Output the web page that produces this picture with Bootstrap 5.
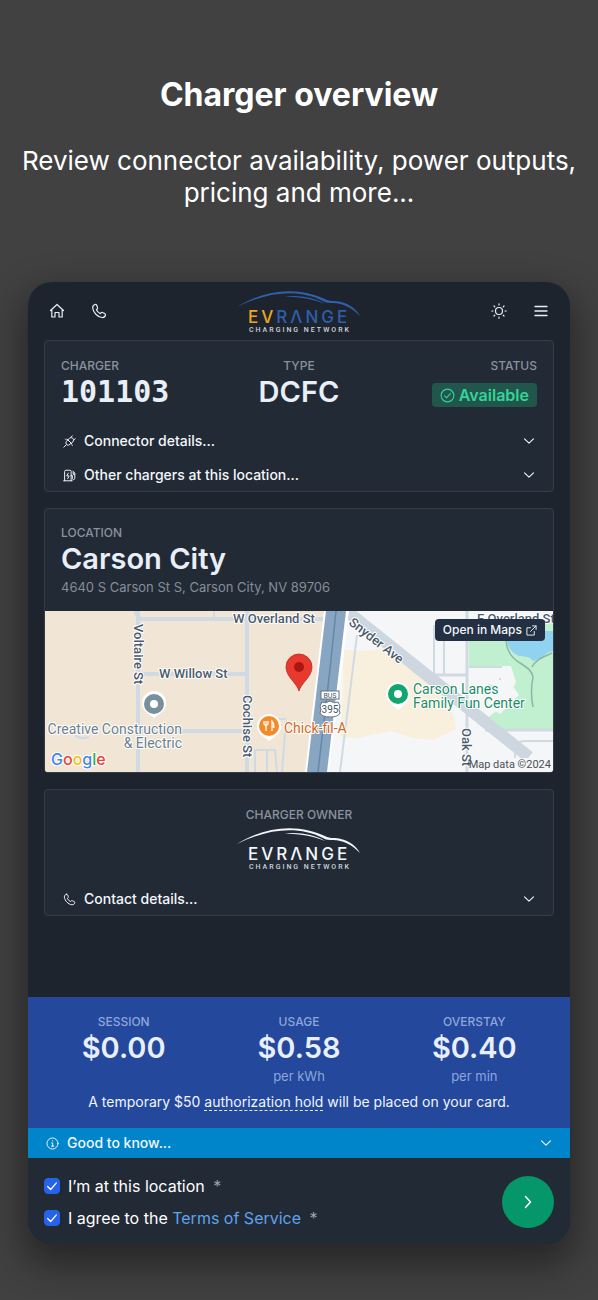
<!DOCTYPE html>
<html lang="en" data-bs-theme="dark">
<head>
<meta charset="utf-8">
<meta name="viewport" content="width=device-width, initial-scale=1">
<title>Charger overview</title>
<link href="https://cdn.jsdelivr.net/npm/bootstrap@5.3.0/dist/css/bootstrap.min.css" rel="stylesheet">
<style>
  body { background: #414142; color: #fff; font-family: "Inter", "Roboto", sans-serif; font-size: 14px; line-height: 20px; }
  svg { display: block; }
  .intro { padding: 73px 12px; }
  .intro h1 { font-size: 32px; line-height: 44px; font-weight: 700; margin-bottom: 28px; }
  .intro p { font-size: 26px; line-height: 32px; margin: 0; }
  .device { margin: 0 28px 55px; border-radius: 24px; background: #1e242e; overflow: hidden; box-shadow: 0 16px 36px 6px rgba(0,0,0,.4); }
  .topbar { height: 58px; padding: 0 12px; }
  .icon-btn { padding: 9px; border: 0; background: none; color: #e8eef6; }
  .icon-btn svg { width: 16px; height: 16px; }
  .stroke { fill: none; stroke: currentColor; stroke-linecap: round; stroke-linejoin: round; stroke-width: 1.5; }
  .panels { padding: 0 16px 81px; gap: 16px; }
  .panel { background: #222a35; border: 1px solid #353d49; border-radius: 4px; overflow: hidden; }
  .eyebrow { font-size: 12px; line-height: 16px; color: #8a929f; text-transform: uppercase; font-weight: 500; }
  .big { font-size: 29px; line-height: 36px; font-weight: 600; color: #e9eff8; }
  .big-mono { font-family: "DejaVu Sans Mono", monospace; font-size: 30px; font-weight: 700; }
  .facts { padding: 17px 16px 15px; }
  .status { background: #20564c; color: #35d399; border-radius: 4px; font-size: 16px; line-height: 24px; font-weight: 600; padding: 0 8px; margin-top: 9px; gap: 4px; }
  .fold { width: 100%; height: 32px; border: 0; background: none; color: #f3f7fc; font-weight: 500; font-size: 14px; padding: 0 18px; gap: 8px; }
  .fold + .fold { margin-top: 2px; }
  .fold svg { width: 13px; height: 13px; flex: none; }
  .fold .chev { width: 12px; height: 12px; }
  .place { padding: 16px 16px 14px; }
  .muted { color: #858d99; font-size: 13px; }
  .map-box svg.map { width: 100%; height: 161px; }
  .map-link { top: 8px; right: 8px; height: 22px; padding: 0 8px; border-radius: 4px; background: #232f42; color: #f3f7fc; font-size: 12px; font-weight: 500; text-decoration: none; gap: 4px; }
  .lbl { font-family: "Roboto", sans-serif; font-size: 13px; font-weight: 500; fill: #4b5a6c; paint-order: stroke; stroke: #fff; stroke-width: 2px; stroke-linejoin: round; }
  .poi { font-size: 14px; font-weight: 400; }
  .road { fill: none; stroke: #d0dae2; stroke-width: 4; }
  .owner { padding-top: 17px; }
  .brand-name { font-family: "Inter", sans-serif; font-size: 17px; letter-spacing: 3px; font-weight: 500; }
  .brand-tag { font-family: "Roboto", sans-serif; font-size: 7px; letter-spacing: 2px; font-weight: 500; }
  .prices { background: #23489c; padding: 17px 8px 16px; }
  .prices .eyebrow, .prices .muted { color: #8ea6dc; }
  .prices .muted { line-height: 20px; min-height: 20px; }
  .prices .note { margin: 6px 0 0; color: #f0f5ff; font-size: 14px; }
  .prices .note a { color: inherit; text-decoration: none; border-bottom: 1px dashed #dce6ff; }
  .know { background: #0085ca; height: 30px; }
  .consent { background: #222a35; padding: 16px 16px 14px; }
  .consent .form-check { min-height: 24px; padding-left: 24px; margin: 0; font-size: 16px; line-height: 24px; }
  .consent .form-check-input { width: 16px; height: 16px; margin-top: 4px; margin-left: -24px; border-radius: 4px; background-color: #2563eb; border-color: #2563eb; }
  .consent .form-check-input:checked { background-image: url("data:image/svg+xml,%3csvg xmlns='http://www.w3.org/2000/svg' viewBox='0 0 16 16'%3e%3cpath fill='none' stroke='%23fff' stroke-width='1.5' stroke-linecap='round' stroke-linejoin='round' d='m3 8.500 3.500 3.500L13 4.500'/%3e%3c/svg%3e"); }
  .consent a { color: #5ea3ec; text-decoration: none; }
  .req { color: #9aa3b0; margin-left: 4px; }
  .next { width: 52px; height: 52px; border: 0; border-radius: 50%; background: #059669; color: #fff; }
</style>
</head>
<body>
<svg width="0" height="0" class="position-absolute" aria-hidden="true">
  <symbol id="i-phone" viewBox="0 0 16 16"><path class="stroke" style="stroke-width:1.2" d="M4.200 1.500c-1.500.4-2.700 1.700-2.500 3.500.5 4.600 4.700 9 9.300 9.500 1.800.2 3.100-1 3.500-2.500.2-.7-.2-1.200-.8-1.500l-2.200-1c-.6-.3-1.100-.1-1.500.3l-.7.800C7.500 9.700 6.200 8.400 5.400 6.700l.8-.7c.4-.4.6-.9.3-1.500l-.8-2.200c-.3-.6-.8-1-1.500-.8z"/></symbol>
  <symbol id="i-down" viewBox="0 0 12 12"><path class="stroke" style="stroke-width:1.100" d="M1.500 3.800 6 8.200l4.500-4.400"/></symbol>
  <symbol id="i-car" viewBox="0 0 124 28"><path d="M0 17C28-1 62-4 90 10c3 1 5 1 8 1 11 1 20 6 25 15C115 18 106 13 96 13c-4 0-7 0-10-2C62-1 32 1 0 17z"/><path d="M48 6.500C63 5 78 8 88 14 76 9 63 7 48 6.500z"/></symbol>
</svg>

<header class="intro text-center">
  <h1>Charger overview</h1>
  <p>Review connector availability, power outputs, pricing and more...</p>
</header>

<main class="device">
  <nav class="topbar d-flex align-items-center justify-content-between" aria-label="Main">
    <div class="d-flex gap-2">
      <button class="icon-btn" aria-label="Home"><svg viewBox="0 0 16 16"><path class="stroke" style="stroke-width:1.2" d="M1.500 7.500 8 1.500l6.500 6M2.800 6.500V14H6V9.500h4V14h3.200V6.500"/></svg></button>
      <button class="icon-btn" aria-label="Call"><svg><use href="#i-phone"/></svg></button>
    </div>
    <svg width="124" height="44" viewBox="0 0 124 44" role="img" aria-label="EVRANGE charging network" overflow="visible">
      <use href="#i-car" y="1" width="124" height="28" fill="#2f61ae"/>
      <text class="brand-name" x="11" y="34" fill="#2f5fab"><tspan fill="#f0a71f">EV</tspan>RΛNGE</text>
      <text class="brand-tag" x="12" y="43" fill="#cdd5df">CHARGING NETWORK</text>
    </svg>
    <div class="d-flex gap-2">
      <button class="icon-btn" aria-label="Theme"><svg viewBox="0 0 16 16"><g class="stroke" style="stroke-width:1.2"><circle cx="8" cy="8" r="3.500"/><path d="M8 .8v1.200M8 14v1.200M.8 8H2M14 8h1.200M3 3l.8.8M12.200 12.200l.8.8M3 13l.8-.8M12.200 3.800 13 3"/></g></svg></button>
      <button class="icon-btn" aria-label="Menu"><svg viewBox="0 0 16 16"><path class="stroke" style="stroke-width:1.3" d="M2 3.500h12M2 8h12M2 12.500h12"/></svg></button>
    </div>
  </nav>

  <div class="panels d-flex flex-column">
    <section class="panel">
      <div class="facts row g-0">
        <div class="col-4"><div class="eyebrow">Charger</div><div class="big big-mono">101103</div></div>
        <div class="col-4 text-center"><div class="eyebrow">Type</div><div class="big">DCFC</div></div>
        <div class="col-4 d-flex flex-column align-items-end"><div class="eyebrow">Status</div>
          <div class="status d-flex align-items-center"><svg width="15" height="15" viewBox="0 0 16 16"><g class="stroke" style="stroke-width:1.200"><circle cx="8" cy="8" r="6.800"/><path d="m5 8.500 2 2 4-4.500"/></g></svg>Available</div></div>
      </div>
      <button class="fold d-flex align-items-center"><svg viewBox="0 0 16 16"><path class="stroke" style="stroke-width:1.200" d="M1 15l3.200-3.200M5 5l6 6M6 6 4.300 7.700a3.200 3.200 0 0 0 0 4c1.100 1.100 2.900 1.100 4 0L10 10M6 6l2-2c1.200-1 3-1 4.200.2s1.200 3 .1 4.100L10 10.500M9.500 3 11.500 1M13 6.500l2-2M4 6l-1-1M10.500 12l1 1"/></svg><span class="me-auto">Connector details...</span><svg class="chev"><use href="#i-down"/></svg></button>
      <button class="fold d-flex align-items-center"><svg viewBox="0 0 16 16"><path class="stroke" style="stroke-width:1.200" d="M2 14.500V3c0-.8.500-1.500 1.500-1.500h5c1 0 1.500.7 1.500 1.500v11.500M.8 14.500h10.500M6.500 5 4.500 8.500h3L5.800 12M10 8h1.500v3.500c0 2 3 2 3 0V5L12 2.500M12.500 4v2.500h2"/></svg><span class="me-auto">Other chargers at this location...</span><svg class="chev"><use href="#i-down"/></svg></button>
    </section>

    <section class="panel">
      <div class="place">
        <div class="eyebrow">Location</div>
        <div class="big">Carson City</div>
        <div class="muted">4640 S Carson St S, Carson City, NV 89706</div>
      </div>
      <div class="map-box position-relative">
        <svg class="map" viewBox="0 0 508 161" preserveAspectRatio="xMidYMid slice" role="img" aria-label="Map of Carson City">
          <rect width="508" height="161" fill="#f5f6f8"/>
          <path fill="#f1e5d5" d="M0 0h281l-20 161H0z"/>
          <path fill="#f8efdc" d="M299 39l24 1 18-3 44 30 24 37 2 14-23 11-20-2-22-7-34 7-16-1z"/>
          <path fill="#c1f0d0" d="M424 10h84v108h-65l-8-4 17-15 12-13 7-15-5-16h-42z"/>
          <path fill="#f5f6f8" d="M424 56h42l-2 14 10 14-10 10-9 9-12-8-19-17z"/>
          <path fill="#8fd3f1" d="M463 20h45v20c-8 0-9 9-20 10-5-6-10-4-14-5-12-5-13-16-11-25z"/>
          <path fill="none" stroke="#8fb5a4" stroke-width="1.500" d="M461 20c-1 18 4 26 14 32 8 5 12 8 13 14-2 10-2 20 0 30M487 56c4-8 12-10 20-14"/>
          <path class="road" d="M93 0v161M93 8h188M93 63h109M202 0v161M93 120h109M90 0l4 7"/>
          <path class="road" style="stroke-width:2" d="M30 124q5 5 14 2M169 0v7M210 161v-22h20l2 22M222 139v22M237 161l4-51M226 108h15M312 24l-17 137M389 14v50M399 10v54M424 56h33M443 74l10 3M455 69v-2M470 161v-23q1-8 10-8h28"/>
          <path class="road" style="stroke-width:3" d="M385 64h37M422 0v161M440 119h68"/>
          <path stroke="#ced6df" stroke-width="12" d="M298-3 484 146"/>
          <path fill="#fff" d="M279 0h25l-20 161h-24z"/>
          <path fill="#88a6c2" d="M281 0h20l-19 161h-20z"/>
          <path stroke="#6487aa" stroke-width="1.500" fill="none" d="m291 0-6 58-12 103"/>
          <g class="lbl">
            <text x="188" y="12">W Overland St</text>
            <text x="114" y="67">W Willow St</text>
            <text x="432" y="12">E Overland St</text>
            <text transform="translate(89 13) rotate(90)">Voltaire St</text>
            <text transform="translate(198 84) rotate(90)">Cochise St</text>
            <text transform="translate(417 117) rotate(90)">Oak St</text>
            <text transform="translate(303 13) rotate(38)">Snyder Ave</text>
          </g>
          <g class="lbl poi">
            <text x="137" y="123" text-anchor="end" style="fill:#6d7f8e">Creative Construction</text>
            <text x="137" y="137" text-anchor="end" style="fill:#6d7f8e">&amp; Electric</text>
            <text x="239" y="122" style="fill:#d1691c">Chick-fil-A</text>
            <text x="368" y="83" style="fill:#1c8c67">Carson Lanes</text>
            <text x="368" y="97" style="fill:#1c8c67">Family Fun Center</text>
          </g>
          <g fill="#fff">
            <path d="M109 107l-8-6a12 12 0 1 1 16 0z"/><path d="M224 130l-8-6a12 12 0 1 1 16 0z"/><path d="M353 99l-8-7a12 12 0 1 1 16 0z"/>
          </g>
          <circle cx="109" cy="93" r="7" fill="#fff" stroke="#78909c" stroke-width="6"/>
          <circle cx="353" cy="83" r="7" fill="#fff" stroke="#12a56d" stroke-width="6"/>
          <circle cx="224" cy="115" r="10" fill="#f58b28"/>
          <path stroke="#fff" stroke-width="1.300" fill="none" d="M219 110v3q2 3 4 0v-3M221 110v10M227 120v-10q2 2 2 6h-2"/>
          <path fill="#e8392e" stroke="#b7281f" stroke-width=".8" d="M254 80c-2-8-13-14-13-24a13 13 0 0 1 26 0c0 10-11 16-13 24z"/>
          <circle cx="254" cy="56" r="5" fill="#ad1510"/>
          <g fill="#fff" stroke="#657383"><rect x="276" y="80" width="18" height="8"/><path d="M277 91q3 2 8-1 5 3 8 1l2 4q-2 4 0 7-2 4-10 4-8 0-10-4 2-3 0-7z"/></g>
          <g font-family="Roboto, sans-serif" fill="#465362" text-anchor="middle"><text x="285" y="87" font-size="7">BUS</text><text x="285" y="102" font-size="10">395</text></g>
          <text x="6" y="154" font-family="Inter, sans-serif" font-size="16" font-weight="500" stroke="#fff" stroke-width="2" paint-order="stroke"><tspan fill="#4285f4">G</tspan><tspan fill="#ea4335">o</tspan><tspan fill="#fbbc05">o</tspan><tspan fill="#4285f4">g</tspan><tspan fill="#34a853">l</tspan><tspan fill="#ea4335">e</tspan></text>
          <path fill="#f5f6f8" d="M428 147h80v14h-80z"/>
          <text x="506" y="157" text-anchor="end" font-family="Roboto, sans-serif" font-size="11" fill="#4c5055">Map data ©2024</text>
        </svg>
        <a href="#" class="map-link position-absolute d-flex align-items-center">Open in Maps <svg width="11" height="11" viewBox="0 0 12 12"><path class="stroke" style="stroke-width:1" d="M5 3H1v8h8V7M7 1h4v4M11 1 5 7"/></svg></a>
      </div>
    </section>

    <section class="panel">
      <div class="owner d-flex flex-column align-items-center">
        <div class="eyebrow">Charger owner</div>
        <svg class="mt-1 mb-2" width="124" height="44" viewBox="0 0 124 44" role="img" aria-label="EVRANGE charging network" overflow="visible">
          <use href="#i-car" width="124" height="28" fill="#f3f7fb"/>
          <text class="brand-name" x="11" y="33" fill="#f3f7fb">EVRΛNGE</text>
          <text class="brand-tag" x="12" y="42" fill="#cdd5df">CHARGING NETWORK</text>
        </svg>
      </div>
      <button class="fold d-flex align-items-center mt-1"><svg><use href="#i-phone"/></svg><span class="me-auto">Contact details...</span><svg class="chev"><use href="#i-down"/></svg></button>
    </section>
  </div>

  <section class="prices text-center">
    <div class="row g-0">
      <div class="col-4"><div class="eyebrow">Session</div><div class="big">$0.00</div></div>
      <div class="col-4"><div class="eyebrow">Usage</div><div class="big">$0.58</div><div class="muted">per kWh</div></div>
      <div class="col-4"><div class="eyebrow">Overstay</div><div class="big">$0.40</div><div class="muted">per min</div></div>
    </div>
    <p class="note">A temporary $50 <a href="#">authorization hold</a> will be placed on your card.</p>
  </section>
  <button class="fold know d-flex align-items-center"><svg viewBox="0 0 16 16"><g class="stroke" style="stroke-width:1.200"><circle cx="8" cy="8" r="6.800"/><path d="M7 7.300h1.200v4M6.800 11.300h2.800M8 4.700v.2"/></g></svg><span class="me-auto">Good to know...</span><svg class="chev"><use href="#i-down"/></svg></button>

  <form class="consent d-flex align-items-center justify-content-between">
    <div class="d-flex flex-column gap-2">
      <div class="form-check"><input class="form-check-input" type="checkbox" id="here" checked><label for="here">I’m at this location <span class="req">*</span></label></div>
      <div class="form-check"><input class="form-check-input" type="checkbox" id="terms" checked><label for="terms">I agree to the <a href="#">Terms of Service</a> <span class="req">*</span></label></div>
    </div>
    <button type="button" class="next d-flex align-items-center justify-content-center" aria-label="Continue"><svg width="16" height="16" viewBox="0 0 16 16"><path class="stroke" d="m5.500 2.500 5 5.500-5 5.500"/></svg></button>
  </form>
</main>
<script src="https://cdn.jsdelivr.net/npm/bootstrap@5.3.0/dist/js/bootstrap.bundle.min.js"></script>
</body>
</html>
